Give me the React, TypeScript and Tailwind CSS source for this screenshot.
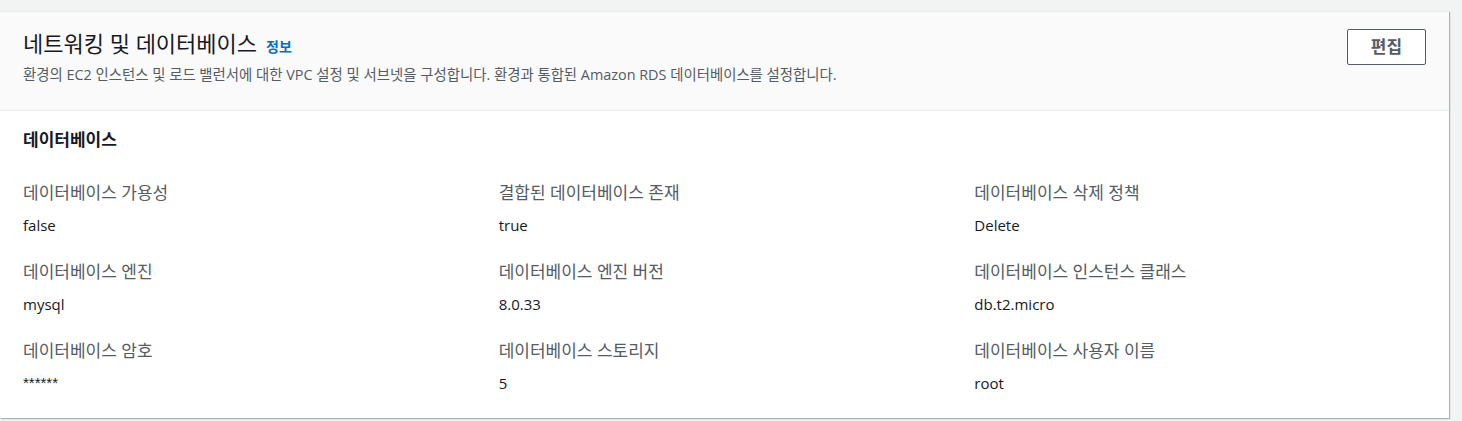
import React from 'react';

const fields = [
  { label: '데이터베이스 가용성', value: 'false' },
  { label: '결합된 데이터베이스 존재', value: 'true' },
  { label: '데이터베이스 삭제 정책', value: 'Delete' },
  { label: '데이터베이스 엔진', value: 'mysql' },
  { label: '데이터베이스 엔진 버전', value: '8.0.33' },
  { label: '데이터베이스 인스턴스 클래스', value: 'db.t2.micro' },
  { label: '데이터베이스 암호', value: '******', masked: true },
  { label: '데이터베이스 스토리지', value: '5' },
  { label: '데이터베이스 사용자 이름', value: 'root' },
];

export default function App() {
  return (
    <div
      className="min-h-screen bg-[#f2f3f3] pt-[11px]"
      style={{ fontFamily: '"Open Sans", "Noto Sans CJK KR", sans-serif' }}
    >
      <div className="w-[1449px] bg-white border-t border-[#eaeded] shadow-[1px_1px_1px_rgba(0,22,43,0.3)]">
        {/* header */}
        <div className="flex items-start justify-between bg-[#fafafa] border-b border-[#eaeded] px-[23px] pt-[17px] pb-[25px]">
          <div>
            <div className="flex items-baseline gap-[9px]">
              <h2 className="text-[22px] leading-[28px] text-[#16191f]">네트워킹 및 데이터베이스</h2>
              <a className="text-[14px] font-semibold text-[#0073bb]">정보</a>
            </div>
            <p className="mt-[8px] text-[14.4px] leading-[20px] text-[#545b64]">
              환경의 EC2 인스턴스 및 로드 밸런서에 대한 VPC 설정 및 서브넷을 구성합니다. 환경과 통합된 Amazon RDS 데이터베이스를 설정합니다.
            </p>
          </div>
          <button className="h-[36px] w-[79px] rounded-[2px] border border-[#545b64] bg-white text-[17px] font-bold text-[#545b64]">
            편집
          </button>
        </div>

        {/* body */}
        <div className="px-[23px] pt-[17px] pb-[24px]">
          <h3 className="text-[17px] leading-[24px] font-bold text-[#16191f]">데이터베이스</h3>
          <div className="mt-[29px] grid grid-cols-3 gap-x-[24px] gap-y-[24px]">
            {fields.map((f) => (
              <div key={f.label}>
                <div className="text-[17px] leading-[24px] text-[#545b64]">{f.label}</div>
                <div
                  className={
                    f.masked
                      ? "mt-[9px] text-[15px] leading-[22px] text-[#16191f] font-['Liberation_Sans',sans-serif]"
                      : 'mt-[9px] text-[15px] leading-[22px] text-[#16191f]'
                  }
                >
                  {f.value}
                </div>
              </div>
            ))}
          </div>
        </div>
      </div>
    </div>
  );
}
